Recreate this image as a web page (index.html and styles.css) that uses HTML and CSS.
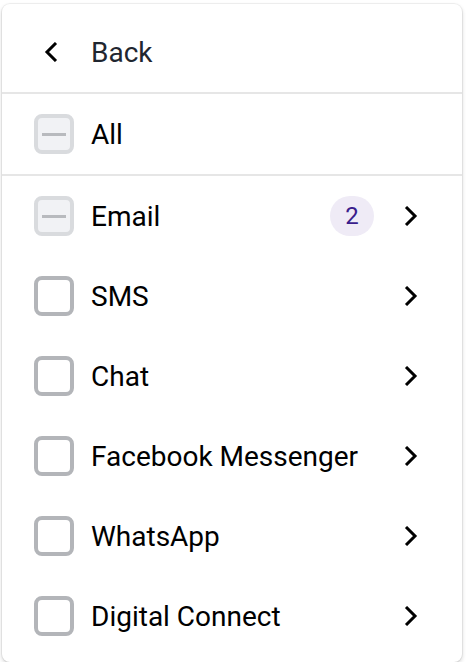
FILE: index.html
```html
<!DOCTYPE html>
<html lang="en">
<head>
    <meta charset="UTF-8">
    <meta name="viewport" content="width=device-width, initial-scale=1.0">
    <title>Channel filter</title>
    <link rel="stylesheet" href="styles.css">
</head>
<body>
    <div class="menu">
        <div class="menu-back">
            <svg class="chevron" width="15" height="20" viewBox="0 0 15 20">
                <path d="M12 1 L3 10 L12 19" fill="none" stroke="#000" stroke-width="3"/>
            </svg>
            <span class="back-label">Back</span>
        </div>

        <div class="menu-all">
            <span class="checkbox checkbox-mixed"></span>
            <span class="label">All</span>
        </div>

        <ul class="channel-list">
            <li class="channel">
                <span class="checkbox checkbox-mixed"></span>
                <span class="label">Email</span>
                <span class="badge">2</span>
                <svg class="chevron" width="15" height="20" viewBox="0 0 15 20">
                    <path d="M3 1 L12 10 L3 19" fill="none" stroke="#000" stroke-width="3"/>
                </svg>
            </li>
            <li class="channel">
                <span class="checkbox"></span>
                <span class="label">SMS</span>
                <svg class="chevron" width="15" height="20" viewBox="0 0 15 20">
                    <path d="M3 1 L12 10 L3 19" fill="none" stroke="#000" stroke-width="3"/>
                </svg>
            </li>
            <li class="channel">
                <span class="checkbox"></span>
                <span class="label">Chat</span>
                <svg class="chevron" width="15" height="20" viewBox="0 0 15 20">
                    <path d="M3 1 L12 10 L3 19" fill="none" stroke="#000" stroke-width="3"/>
                </svg>
            </li>
            <li class="channel">
                <span class="checkbox"></span>
                <span class="label">Facebook Messenger</span>
                <svg class="chevron" width="15" height="20" viewBox="0 0 15 20">
                    <path d="M3 1 L12 10 L3 19" fill="none" stroke="#000" stroke-width="3"/>
                </svg>
            </li>
            <li class="channel">
                <span class="checkbox"></span>
                <span class="label">WhatsApp</span>
                <svg class="chevron" width="15" height="20" viewBox="0 0 15 20">
                    <path d="M3 1 L12 10 L3 19" fill="none" stroke="#000" stroke-width="3"/>
                </svg>
            </li>
            <li class="channel">
                <span class="checkbox"></span>
                <span class="label">Digital Connect</span>
                <svg class="chevron" width="15" height="20" viewBox="0 0 15 20">
                    <path d="M3 1 L12 10 L3 19" fill="none" stroke="#000" stroke-width="3"/>
                </svg>
            </li>
        </ul>
    </div>
</body>
</html>
```

FILE: styles.css
```css
body {
    margin: 0;
    background-color: #fff;
    font-family: Roboto, "Liberation Sans", sans-serif;
    color: #000;
}

.menu {
    width: 460px;
    height: 658px;
    margin: 4px 0 0 2px;
    background-color: #fff;
    border-radius: 8px;
    box-shadow: 0 0 0 1px rgba(0,0,0,0.05), 0 2px 4px rgba(0,0,0,0.18);
    box-sizing: border-box;
    padding-bottom: 6px;
}

.menu-back {
    height: 90px;
    box-sizing: border-box;
    padding: 8px 0 0 42px;
    display: flex;
    align-items: center;
    border-bottom: 2px solid #e6e6e6;
}

.menu-back .chevron {
    margin-right: 32px;
}

.back-label {
    font-size: 28px;
    color: #1f2630;
}

.menu-all {
    height: 82px;
    box-sizing: border-box;
    padding-left: 32px;
    display: flex;
    align-items: center;
    border-bottom: 2px solid #e6e6e6;
}

.channel-list {
    list-style: none;
    margin: 0;
    padding: 0;
}

.channel {
    height: 80px;
    padding: 0 44px 0 32px;
    display: flex;
    align-items: center;
}

.checkbox {
    width: 40px;
    height: 40px;
    box-sizing: border-box;
    border: 4px solid #b3b5b9;
    border-radius: 8px;
    margin-right: 17px;
    flex-shrink: 0;
    display: flex;
    align-items: center;
    justify-content: center;
}

.checkbox-mixed {
    border-color: #d9dbde;
    background-color: #f1f2f5;
}

.checkbox-mixed::after {
    content: "";
    width: 24px;
    height: 3px;
    background-color: #b8babe;
}

.label {
    font-size: 28px;
    flex: 1;
}

.badge {
    width: 44px;
    height: 40px;
    border-radius: 20px;
    background-color: #efebf6;
    color: #3a1d8c;
    font-size: 24px;
    display: flex;
    align-items: center;
    justify-content: center;
    margin-right: 29px;
}
```
